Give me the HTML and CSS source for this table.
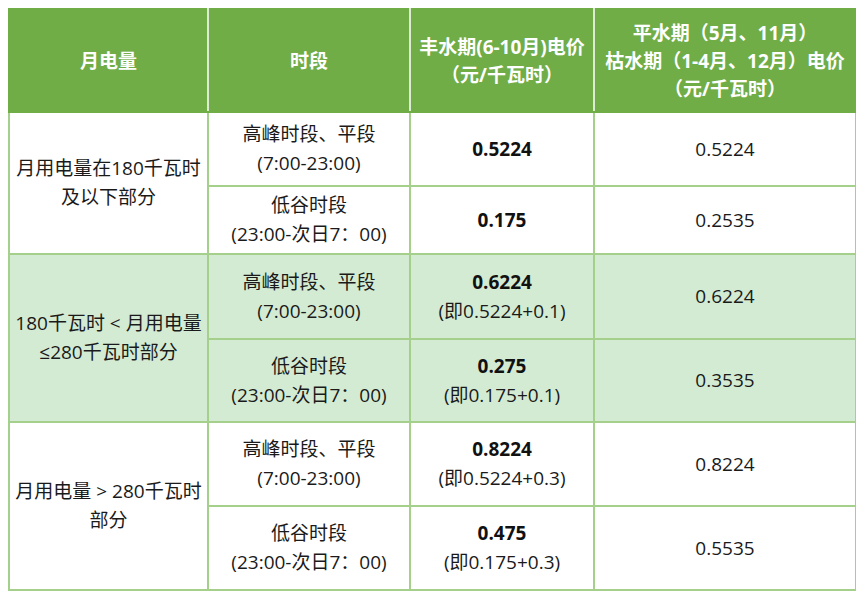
FILE: index.html
```html
<!DOCTYPE html>
<html lang="zh-CN">
<head>
<meta charset="utf-8">
<title>电价表</title>
<link rel="stylesheet" href="styles.css">
</head>
<body>
<table class="price-table">
  <colgroup>
    <col class="c1"><col class="c2"><col class="c3"><col class="c4">
  </colgroup>
  <thead>
    <tr class="head-row">
      <th>月电量</th>
      <th>时段</th>
      <th>丰水期(6-10月)电价<br>（元/千瓦时）</th>
      <th>平水期（5月、11月）<br>枯水期（1-4月、12月）电价<br>（元/千瓦时）</th>
    </tr>
  </thead>
  <tbody>
    <tr class="r-a1">
      <td rowspan="2">月用电量在180千瓦时<br>及以下部分</td>
      <td>高峰时段、平段<br>(7:00-23:00)</td>
      <td><b>0.5224</b></td>
      <td>0.5224</td>
    </tr>
    <tr class="r-b1">
      <td>低谷时段<br>(23:00-次日7：00)</td>
      <td><b>0.175</b></td>
      <td>0.2535</td>
    </tr>
    <tr class="band r-a2">
      <td rowspan="2">180千瓦时 &lt; 月用电量<br>≤280千瓦时部分</td>
      <td>高峰时段、平段<br>(7:00-23:00)</td>
      <td><b>0.6224</b><br>(即0.5224+0.1)</td>
      <td>0.6224</td>
    </tr>
    <tr class="band r-b2">
      <td>低谷时段<br>(23:00-次日7：00)</td>
      <td><b>0.275</b><br>(即0.175+0.1)</td>
      <td>0.3535</td>
    </tr>
    <tr class="r-a3">
      <td rowspan="2">月用电量 &gt; 280千瓦时<br>部分</td>
      <td>高峰时段、平段<br>(7:00-23:00)</td>
      <td><b>0.8224</b><br>(即0.5224+0.3)</td>
      <td>0.8224</td>
    </tr>
    <tr class="r-b3">
      <td>低谷时段<br>(23:00-次日7：00)</td>
      <td><b>0.475</b><br>(即0.175+0.3)</td>
      <td>0.5535</td>
    </tr>
  </tbody>
</table>
</body>
</html>
```
FILE: styles.css
```css
html, body {
  background: #ffffff;
}
body {
  margin: 8px;
  font-family: "Open Sans", "Noto Sans CJK SC", sans-serif;
  color: #1a1a1a;
}
.price-table {
  border-collapse: collapse;
  table-layout: fixed;
  width: 847px;
  font-size: 19px;
  line-height: 29px;
}
.c1 { width: 199px; }
.c2 { width: 202px; }
.c3 { width: 184px; }
.c4 { width: 262px; }

.price-table th,
.price-table td {
  padding: 0;
  text-align: center;
  vertical-align: middle;
  white-space: nowrap;
}
.price-table th {
  background: #70ad47;
  color: #ffffff;
  font-weight: 700;
  line-height: 28px;
  border: 2px solid #70ad47;
  border-right-color: #dcebd2;
}
.price-table th:last-child {
  border-right-color: #70ad47;
}
.price-table td {
  border: 2px solid #a5d08c;
  font-weight: 400;
}
.price-table td b {
  font-weight: 700;
  color: #111111;
}
.band td {
  background: #d4ebd3;
}
.head-row { height: 103px; }
.r-a1 { height: 74px; }
.r-b1 { height: 68px; }
.r-a2 { height: 85px; }
.r-b2 { height: 83px; }
.r-a3 { height: 84px; }
.r-b3 { height: 84px; }
```
